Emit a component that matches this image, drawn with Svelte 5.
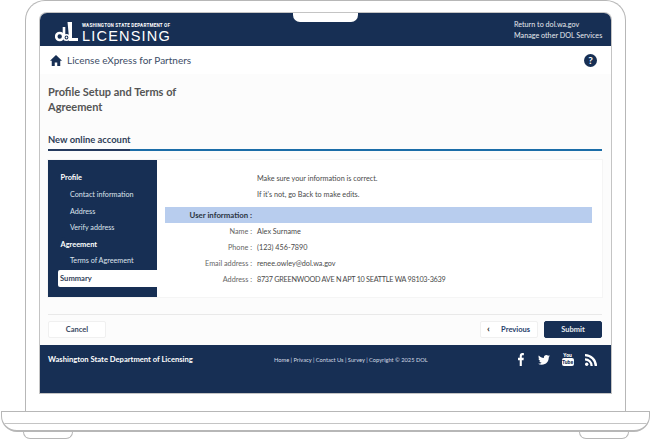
<script>
  const sideItems = [
    { label: 'Profile', top: true },
    { label: 'Contact information' },
    { label: 'Address' },
    { label: 'Verify address' },
    { label: 'Agreement', top: true },
    { label: 'Terms of Agreement' },
    { label: 'Summary', active: true }
  ];
  const rows = [
    ['Name', 'Alex Surname'],
    ['Phone', '(123) 456-7890'],
    ['Email address', 'renee.owley@dol.wa.gov'],
    ['Address', '8737 GREENWOOD AVE N APT 10 SEATTLE WA 98103-3639']
  ];
  const links = 'Home | Privacy | Contact Us | Survey | Copyright © 2025 DOL';
</script>

<div class="page">
  <div class="lid">
    <div class="screen">
      <div class="notch"></div>
      <header class="top">
        <div class="logo">
          <svg width="23" height="21" viewBox="0 0 23 21" aria-hidden="true">
            <circle cx="4.700" cy="14.500" r="3.500" fill="none" stroke="#fff" stroke-width="2.600" />
            <rect x="7.700" y="5" width="2.600" height="11" fill="#fff" />
            <circle cx="11.500" cy="15.500" r="2.700" fill="#172f54" stroke="#fff" stroke-width="1.600" />
            <circle cx="11.500" cy="15.500" r="0.900" fill="#fff" />
            <path d="M12.500 0h4.500v16h-3z" fill="#fff" />
            <rect x="14" y="16" width="9" height="3" fill="#fff" />
          </svg>
          <div class="logo-text">
            <span class="state">WASHINGTON STATE DEPARTMENT OF</span>
            <span class="lic">LICENSING</span>
          </div>
        </div>
        <div class="top-links">
          <span>Return to dol.wa.gov</span>
          <span>Manage other DOL Services</span>
        </div>
      </header>

      <nav class="appbar">
        <div class="brand">
          <svg width="12" height="11" viewBox="0 0 24 22" aria-hidden="true">
            <path d="M12 0 0 11.500h3.500V22h6v-7h5v7h6V11.500H24z" fill="#172f54" />
          </svg>
          <span>License eXpress for Partners</span>
        </div>
        <span class="help">?</span>
      </nav>

      <main class="main">
        <h1>Profile Setup and Terms of<br />Agreement</h1>
        <h2>New online account</h2>
        <div class="rule"><span></span></div>

        <section class="panel">
          <aside class="side">
            {#each sideItems as item}
              <div class="side-item" class:top={item.top} class:active={item.active}>{item.label}</div>
            {/each}
          </aside>
          <div class="content">
            <p>Make sure your information is correct.</p>
            <p>If it's not, go Back to make edits.</p>
            <div class="band"><b>User information :</b></div>
            {#each rows as row}
              <div class="row">
                <span class="key">{row[0]} :</span>
                <span class:caps={row[0] === 'Address'}>{row[1]}</span>
              </div>
            {/each}
          </div>
        </section>

        <div class="actions">
          <button class="btn">Cancel</button>
          <div class="right">
            <button class="btn prev"><i>‹</i>Previous</button>
            <button class="btn submit">Submit</button>
          </div>
        </div>
      </main>

      <footer class="foot">
        <b>Washington State Department of Licensing</b>
        <div class="foot-links">{links}</div>
        <div class="social">
          <svg class="fb" width="6" height="13" viewBox="0 0 8 15" preserveAspectRatio="none" aria-hidden="true">
            <path d="M2.300 15V8.300H0V5.600h2.300V3.500C2.300 1.200 3.700 0 5.700 0c1 0 1.800.1 2.100.1v2.400H6.400c-1.100 0-1.300.5-1.300 1.300v1.800h2.600l-.3 2.700H5.100V15z" fill="#fff" />
          </svg>
          <svg width="12" height="10" viewBox="0 0 24 20" aria-hidden="true">
            <path d="M24 2.400c-.9.4-1.800.7-2.800.8 1-.6 1.800-1.600 2.200-2.700-1 .6-2 1-3.100 1.200C19.300.7 18 0 16.600 0c-2.700 0-4.900 2.200-4.900 4.900 0 .4 0 .8.1 1.100C7.700 5.800 4.100 3.900 1.700.9c-.4.7-.7 1.600-.7 2.500 0 1.700.9 3.200 2.200 4.100-.8 0-1.600-.2-2.200-.6v.1c0 2.400 1.700 4.400 3.900 4.800-.4.1-.8.2-1.300.2-.3 0-.6 0-.9-.1.6 2 2.400 3.400 4.600 3.400-1.700 1.300-3.800 2.100-6.100 2.100-.4 0-.8 0-1.200-.1 2.200 1.400 4.800 2.200 7.500 2.200 9.100 0 14-7.500 14-14v-.6c1-.7 1.800-1.500 2.500-2.200z" fill="#fff" />
          </svg>
          <div class="yt">
            <span class="yt-you">You</span>
            <span class="yt-tube">Tube</span>
          </div>
          <svg width="12" height="12" viewBox="0 0 12 12" aria-hidden="true">
            <circle cx="1.700" cy="10.300" r="1.700" fill="#fff" />
            <path d="M0 4.200a7.800 7.800 0 0 1 7.800 7.800H5.500A5.500 5.500 0 0 0 0 6.500z" fill="#fff" />
            <path d="M0 0a12 12 0 0 1 12 12H9.700A9.700 9.700 0 0 0 0 2.300z" fill="#fff" />
          </svg>
        </div>
      </footer>
    </div>
  </div>
  <div class="base"><div class="lip"></div></div>
  <div class="feet"><span></span><span></span></div>
</div>

<style>
  :global(body) {
    margin: 0;
    background: #fff;
  }
  .page {
    width: 650px;
    height: 439px;
    overflow: hidden;
    font-family: "Lato", "Open Sans", sans-serif;
    color: #444;
  }
  .lid {
    box-sizing: border-box;
    width: 601px;
    height: 411px;
    margin-left: 25px;
    padding: 12px 14px 0 14px;
    border: 1.5px solid #b7b7b7;
    border-bottom: 0;
    border-radius: 20px 20px 0 0;
  }
  .screen {
    position: relative;
    height: 380px;
    display: flex;
    flex-direction: column;
    border-radius: 7px 7px 0 0;
    box-shadow: 0 0 0 1px #c4c4c4;
  }
  .notch {
    position: absolute;
    left: 253px;
    top: 0;
    width: 65px;
    height: 9px;
    background: #fff;
    border-radius: 0 0 7px 7px;
  }
  .top {
    height: 33px;
    flex: none;
    display: flex;
    justify-content: space-between;
    align-items: center;
    padding: 0 9px 0 15px;
    background: #172f54;
    border-radius: 7px 7px 0 0;
  }
  .logo {
    display: flex;
    align-items: flex-end;
    gap: 4px;
    margin-top: 5px;
  }
  .logo-text {
    display: flex;
    flex-direction: column;
    color: #fff;
    padding-bottom: 1px;
  }
  .state {
    font: 700 4.600px/10px "Roboto", sans-serif;
    letter-spacing: 0.2px;
    white-space: nowrap;
  }
  .lic {
    font: 400 14.500px/11px "Liberation Sans", sans-serif;
    letter-spacing: 1.200px;
    white-space: nowrap;
  }
  .top-links {
    display: flex;
    flex-direction: column;
    width: 88px;
    font-size: 7.200px;
    line-height: 11px;
    color: #e6e9ee;
    white-space: nowrap;
  }
  .appbar {
    height: 28px;
    flex: none;
    display: flex;
    justify-content: space-between;
    align-items: center;
    padding: 0 14px 0 10px;
    background: #fff;
  }
  .brand {
    display: flex;
    align-items: center;
    gap: 5px;
    font-size: 10px;
    color: #3c4c66;
  }
  .help {
    width: 13px;
    height: 13px;
    border-radius: 50%;
    background: #172f54;
    color: #fff;
    font-size: 10px;
    font-weight: 700;
    line-height: 13px;
    text-align: center;
  }
  .main {
    flex: 1;
    box-sizing: border-box;
    padding: 10px 9px 0 8px;
    background: #fcfcfc;
    display: flex;
    flex-direction: column;
  }
  h1 {
    margin: 0;
    font-size: 11px;
    font-weight: 700;
    line-height: 15px;
    color: #555;
  }
  h2 {
    margin: 20px 0 0;
    font-size: 9.400px;
    font-weight: 700;
    line-height: 12px;
    color: #2f4058;
  }
  .rule {
    height: 2px;
    margin-top: 3px;
    background: #1b6da8;
  }
  .rule span {
    display: block;
    width: 82px;
    height: 2px;
    background: #253a5e;
  }
  .panel {
    display: flex;
    height: 137px;
    margin-top: 9px;
    box-sizing: border-box;
    background: #fff;
    box-shadow: 0 0 0 1px #f5f5f5;
  }
  .side {
    width: 109px;
    flex: none;
    box-sizing: border-box;
    padding: 10.400px 0 0 10px;
    background: #172f54;
    font-size: 7.200px;
    color: #dde3ec;
  }
  .side-item {
    height: 16.600px;
    line-height: 16.600px;
    padding-left: 12px;
    white-space: nowrap;
  }
  .side-item.top {
    padding-left: 2.500px;
    font-size: 7.400px;
    font-weight: 700;
    color: #fff;
  }
  .side-item.active {
    padding-left: 2px;
    background: #fff;
    color: #2f4058;
    font-size: 7.600px;
    font-weight: 700;
    border-radius: 2px 0 0 2px;
  }
  .content {
    flex: 1;
    padding: 10.500px 10px 0 8px;
    font-size: 7.250px;
    color: #4a4a4a;
  }
  .content p {
    margin: 0 0 0 92px;
    height: 16px;
    line-height: 16px;
  }
  .band {
    display: flex;
    justify-content: flex-end;
    box-sizing: border-box;
    height: 16px;
    margin: 4.500px 0 0.500px;
    padding-right: 340px;
    background: #b8cdee;
    font-size: 7.800px;
    line-height: 16px;
    color: #2b3442;
  }
  .row {
    display: grid;
    grid-template-columns: 87px 1fr;
    column-gap: 5px;
    height: 16.200px;
    line-height: 16.200px;
  }
  .key {
    text-align: right;
    color: #666;
  }
  .caps {
    letter-spacing: -0.270px;
    white-space: nowrap;
  }
  .actions {
    display: flex;
    justify-content: space-between;
    margin-top: 17px;
    padding-top: 6px;
    border-top: 1px solid #e9e9e9;
  }
  .right {
    display: flex;
    gap: 6px;
  }
  .btn {
    width: 58px;
    height: 17px;
    padding: 0;
    font-family: inherit;
    font-size: 7.500px;
    font-weight: 700;
    color: #3a4a63;
    background: #fff;
    border: 1px solid #f0f0f0;
    border-radius: 2px;
  }
  .prev {
    display: flex;
    align-items: center;
    justify-content: space-between;
    padding: 0 7px 0 6px;
    color: #26406b;
  }
  .prev i {
    font-style: normal;
    font-size: 10px;
    line-height: 9px;
    margin-top: -2px;
    color: #333;
  }
  .submit {
    background: #172f54;
    border-color: #172f54;
    color: #e8ecf2;
  }
  .foot {
    height: 48px;
    flex: none;
    display: flex;
    align-items: flex-start;
    box-sizing: border-box;
    padding: 8px 14px 0 8px;
    background: #172f54;
    color: #fff;
  }
  .foot b {
    width: 226px;
    font-size: 7.600px;
    line-height: 13px;
    white-space: nowrap;
  }
  .foot-links {
    font-size: 5.700px;
    line-height: 13px;
    color: #d5dbe5;
    white-space: nowrap;
  }
  .social {
    margin-left: auto;
    display: flex;
    align-items: center;
    gap: 11.500px;
    height: 13px;
  }
  .fb {
    margin-right: 3px;
  }
  .yt {
    display: flex;
    flex-direction: column;
    align-items: center;
    width: 12px;
    margin-top: -2px;
    font: 700 5px/6px "Roboto", sans-serif;
    color: #fff;
  }
  .yt-tube {
    width: 12px;
    text-align: center;
    background: #fff;
    color: #172f54;
    border-radius: 2px;
    line-height: 8px;
    font-size: 5px;
  }
  .base {
    box-sizing: border-box;
    width: 649px;
    height: 21px;
    margin-left: 0.500px;
    border: 1.500px solid #b7b7b7;
    border-bottom-width: 2px;
    border-radius: 0 0 16px 16px;
    overflow: hidden;
  }
  .lip {
    height: 11px;
    border-bottom: 1.500px solid #c4c4c4;
  }
  .feet {
    display: flex;
    justify-content: space-between;
    padding: 0 21px 0 23px;
  }
  .feet span {
    box-sizing: border-box;
    width: 50px;
    height: 7px;
    border: 1px solid #b7b7b7;
    border-top: 0;
    border-radius: 0 0 7px 7px;
  }
</style>
